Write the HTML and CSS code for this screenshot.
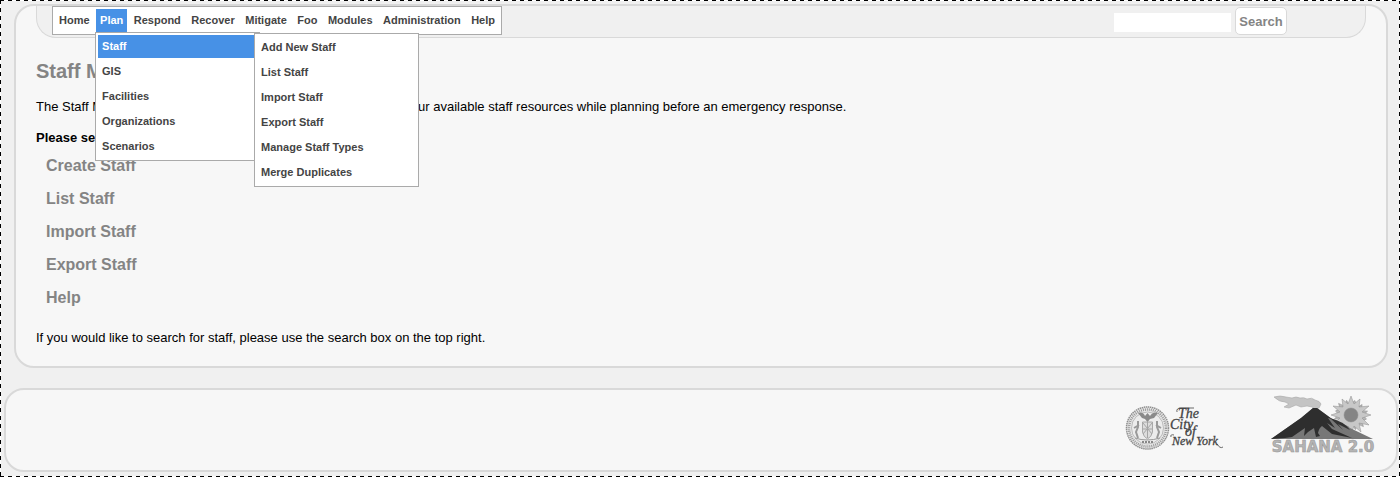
FILE: index.html
```html
<!DOCTYPE html>
<html lang="en">
<head>
<meta charset="utf-8">
<title>Staff Management</title>
<link rel="stylesheet" href="styles.css">
</head>
<body>
<div class="page">
  <div class="panel">
    <header class="topbar">
      <nav class="menu" aria-label="Main">
        <ul class="menu-list">
          <li><a href="#">Home</a></li>
          <li class="open"><a class="active" href="#">Plan</a>
            <ul class="dropdown">
              <li class="open"><a class="active" href="#">Staff</a>
                <ul class="dropdown submenu">
                  <li><a href="#">Add New Staff</a></li>
                  <li><a href="#">List Staff</a></li>
                  <li><a href="#">Import Staff</a></li>
                  <li><a href="#">Export Staff</a></li>
                  <li><a href="#">Manage Staff Types</a></li>
                  <li><a href="#">Merge Duplicates</a></li>
                </ul>
              </li>
              <li><a href="#">GIS</a></li>
              <li><a href="#">Facilities</a></li>
              <li><a href="#">Organizations</a></li>
              <li><a href="#">Scenarios</a></li>
            </ul>
          </li>
          <li><a href="#">Respond</a></li>
          <li><a href="#">Recover</a></li>
          <li><a href="#">Mitigate</a></li>
          <li><a href="#">Foo</a></li>
          <li><a href="#">Modules</a></li>
          <li><a href="#">Administration</a></li>
          <li><a href="#">Help</a></li>
        </ul>
      </nav>
      <form class="search">
        <input type="text" aria-label="Search">
        <button type="button">Search</button>
      </form>
    </header>
    <main class="content">
      <h1>Staff Management</h1>
      <p>The Staff Management module allows you to manage and track your available staff resources while planning before an emergency response.</p>
      <p class="prompt">Please select one of the following:</p>
      <ul class="actions">
        <li><a href="#">Create Staff</a></li>
        <li><a href="#">List Staff</a></li>
        <li><a href="#">Import Staff</a></li>
        <li><a href="#">Export Staff</a></li>
        <li><a href="#">Help</a></li>
      </ul>
      <p class="note">If you would like to search for staff, please use the search box on the top right.</p>
    </main>
  </div>
  <footer class="footer">
    <svg class="nyc" viewBox="0 0 100 50" role="img" aria-label="The City of New York">
      <circle cx="22.500" cy="25" r="21" fill="#e6e6e6" stroke="#8f8f8f" stroke-width="1.500" stroke-dasharray="1.500 .6"/>
      <circle cx="22.500" cy="25" r="18.500" fill="none" stroke="#999" stroke-width="2.500" stroke-dasharray="1 1"/>
      <circle cx="22.500" cy="25" r="16" fill="#ececec" stroke="#b0b0b0" stroke-width=".8"/>
      <path d="M13 10q5-2 7 3l2.500-3 2.500 3q3-5 8-3l-4 5-4 1-2.500 3-2.500-3-3-1z" fill="#8a8a8a"/>
      <path d="M17.500 19h10v10q-1 5-5 7-4-2-5-7z" fill="#ddd" stroke="#999" stroke-width=".8"/>
      <path d="M18 20l9 11M27 20l-9 11M22.500 19v16M18 26h9" stroke="#a5a5a5" fill="none"/>
      <path d="M13 18v6l-2 5 2 6M32 18v6l2 5-2 6M9 25l5-3M36 25l-5-3" stroke="#999" stroke-width="2" fill="none"/>
      <path d="M10 35q12 4 25 0" stroke="#999" fill="none"/>
      <path d="M17 39h11" stroke="#888" stroke-width="2" stroke-dasharray="2 1" fill="none"/>
      <g class="script">
        <text x="53" y="15">The</text>
        <text x="45" y="26">City</text>
        <text x="60" y="33">of</text>
        <text class="script-small" x="47" y="42">New York</text>
      </g>
      <path d="M52 9q-1-4 4-4h13M46 34q-1-3 3-2M92 41q3 5 6 3M65 21q0 5-4 6" stroke="#444" stroke-width=".8" fill="none"/>
    </svg>
    <svg class="sahana" viewBox="0 0 106 60" role="img" aria-label="Sahana 2.0">
      <g transform="translate(81 20)" stroke="#8c8c8c" stroke-width=".5">
        <path d="M0-15L4-9 8-13 9-7 15-8 12-3 16 0 12 3 15 8 9 7 8 13 4 9 0 15-4 9-8 13-9 7-15 8-12 3-16 0-12-3-15-8-9-7-8-13-4-9z" fill="#b8b8b8" transform="rotate(15)"/>
        <path d="M0-19L3-11 9-16 8-8 18-9 11-3 20 0 11 3 18 10 8 8 10 17 3 11 0 19-3 11-10 17-8 8-18 10-11 3-20 0-11-3-18-9-8-8-9-16-3-11z" fill="#c8c8c8"/>
        <circle r="7" fill="#858585"/>
      </g>
      <path d="M4 2q6-2 12 0l6 1q4-2 8 0 4-1 7 1 5-2 8 1 5 1 6 4l-2 4-4 1-3-2-5-1-6 1-5-2-7 3-5-1 5-3-4-2Q9 7 4 2z" fill="#c4c4c4" stroke="#aaa" stroke-width=".6"/>
      <path d="M1 44L31 23l12-10h4l15 11q12 4 18 9l23 11z" fill="#777"/>
      <path d="M1 44L31 23l12-10h4l15 11-4-1 7 10-8-5 5 6 20 9-20-4-10-8q-3 2-4 7l2 3-4 1-2-9-6 4-4 4 1-8-13 9-7 1z" fill="#2e2e2e"/>
      <path d="M60 23q15 4 20 12L68 29l5 6z" fill="#333"/>
      <text class="wordmark" x="53" y="57" text-anchor="middle">SAHANA 2.0</text>
    </svg>
  </footer>
</div>
</body>
</html>
```
FILE: styles.css
```css
* {
  box-sizing: border-box;
}

body {
  margin: 0;
  background: #f0f0f0;
  color: #000;
  font: 13px/16px "Liberation Sans", Arial, sans-serif;
}

a {
  color: inherit;
  text-decoration: none;
}

ul {
  list-style: none;
  margin: 0;
  padding: 0;
}

.page {
  padding: 4px 2px 5px 4px;
  background:
    repeating-linear-gradient(90deg, #000 0 4px, #fff 4px 8px) top / 100% 1px no-repeat,
    repeating-linear-gradient(90deg, #000 0 4px, #fff 4px 8px) bottom / 100% 1px no-repeat,
    repeating-linear-gradient(#000 0 4px, #fff 4px 8px) left / 1px 100% no-repeat,
    repeating-linear-gradient(#000 0 4px, #fff 4px 8px) right / 1px 100% no-repeat;
}

.panel,
.footer {
  background: #f7f7f7;
  border: 2px solid #d9d9d9;
  border-radius: 20px;
}

.panel {
  margin: 0 10px 20px;
  padding: 0 20px 20px;
}

.topbar {
  display: flex;
  align-items: flex-start;
  justify-content: space-between;
  height: 32px;
  padding: 0 78px 0 15px;
  background: #f0f0f0;
  border: 1px solid #d9d9d9;
  border-top: 0;
  border-radius: 0 0 20px 20px;
}

.menu {
  width: 450px;
  padding: 2px;
  background: #fff;
  border: 1px solid #aaa;
  color: #444;
  font-size: 11px;
  font-weight: bold;
  line-height: 23px;
}

.menu-list {
  display: flex;
  justify-content: space-between;
}

.menu li {
  position: relative;
}

.menu a {
  display: block;
  padding: 0 4px;
}

.menu .active {
  background: #4791e6;
  color: #fff;
}

.dropdown {
  position: absolute;
  z-index: 1;
  top: 23px;
  left: -1px;
  display: grid;
  gap: 2px;
  width: 165px;
  padding: 2px;
  background: #fff;
  border: 1px solid #aaa;
}

.submenu {
  top: -2px;
  left: 156px;
}

.search {
  display: flex;
  gap: 4px;
  align-items: center;
  padding-top: 1px;
}

.search input {
  width: 117px;
  height: 19px;
  margin-top: 3px;
  padding: 0 4px;
  border: 1px solid #fff;
  background: #fff;
}

.search button {
  width: 52px;
  height: 28px;
  padding: 0;
  background: #fff;
  border: 1px solid #d9d9d9;
  border-radius: 5px;
  color: #848484;
  font: bold 13px "Liberation Sans", Arial, sans-serif;
}

.content h1 {
  margin: 20px 0 15px;
  color: #848484;
  font-size: 20px;
  line-height: 26px;
}

.content p {
  margin: 0 0 15px;
}

.content .prompt {
  margin-bottom: 3px;
  font-weight: bold;
}

.actions {
  padding-left: 10px;
  color: #848484;
  font-size: 16px;
  font-weight: bold;
  line-height: 33px;
}

.actions + .note {
  margin: 16px 0 0;
}

.footer {
  display: flex;
  justify-content: flex-end;
  align-items: flex-start;
  gap: 45px;
  height: 84px;
  padding: 5px 20px;
}

.nyc {
  width: 100px;
  height: 50px;
  margin-top: 8px;
}

.sahana {
  width: 106px;
  height: 60px;
}

.script {
  fill: #444;
  stroke: #444;
  stroke-width: 0.3px;
  font: italic 14px "Liberation Serif", "Times New Roman", serif;
}

.script-small {
  font-size: 12px;
}

.wordmark {
  fill: #b4b4b4;
  stroke: #999;
  stroke-width: 0.6px;
  font: bold 15px "DejaVu Sans", Verdana, sans-serif;
}
```
